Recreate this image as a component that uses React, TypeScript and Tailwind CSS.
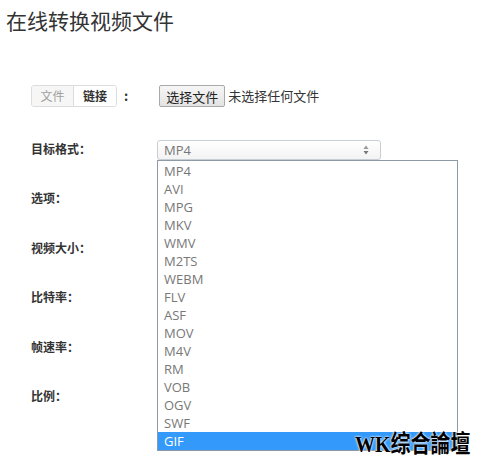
import { useState } from "react";

const formats = ["MP4", "AVI", "MPG", "MKV", "WMV", "M2TS", "WEBM", "FLV", "ASF", "MOV", "M4V", "RM", "VOB", "OGV", "SWF", "GIF"];

const labels = ["目标格式：", "选项：", "视频大小：", "比特率：", "帧速率：", "比例："];

export default function App() {
  const [selected] = useState("GIF");

  return (
    <div
      className="relative w-[484px] h-[472px] bg-white overflow-hidden text-[#333]"
      style={{ fontFamily: '"Noto Sans CJK SC", "Open Sans", sans-serif' }}
    >
      <h1 className="pl-[6px] pt-[6px] h-[44px] text-[21px] leading-[28px] font-normal text-[#333]">在线转换视频文件</h1>

      <div className="pl-[31px] pt-[41px]">
        <div className="flex items-center h-[22px]">
          <div className="flex h-[22px] border border-[#dcdcdc] rounded-[3px] text-[12px] overflow-hidden">
            <span className="w-[42px] flex items-center justify-center bg-[#f6f6f6] text-[#a0a0a0] border-r border-[#dcdcdc]">文件</span>
            <span className="w-[42px] flex items-center justify-center bg-white text-[#333] font-bold">链接</span>
          </div>
          <span className="ml-[7px] text-[13px] font-bold">:</span>
          <button className="ml-[31px] h-[22px] px-[6px] border border-[#a9a9a9] rounded-[2px] bg-gradient-to-b from-[#f6f6f6] to-[#e3e3e3] text-[13px] leading-none text-[#222]">
            选择文件
          </button>
          <span className="ml-[3px] text-[13px] text-[#333]">未选择任何文件</span>
        </div>

        <div className="mt-[17px] flex flex-col">
          {labels.map((label, i) => (
            <div key={label} className="flex items-center h-[49.5px]">
              <span className="w-[126px] text-[12px] font-bold text-[#333]">{label}</span>
              {i === 0 && (
                <div className="relative mt-[3px]">
                  <div className="flex items-center justify-between w-[224px] h-[20px] border border-[#c8ced6] rounded-[3px] bg-gradient-to-b from-white to-[#f3f3f3] pl-[6px] pr-[11px] shadow-[0_1px_1px_rgba(0,0,0,0.05)]">
                    <span className="text-[13px] text-[#777]" style={{ fontFamily: '"Open Sans", sans-serif' }}>MP4</span>
                    <svg width="6" height="10" viewBox="0 0 6 10">
                      <path d="M3 0.5 L5.5 4 H0.5 Z" fill="#999" />
                      <path d="M3 9.5 L5.5 6 H0.5 Z" fill="#777" />
                    </svg>
                  </div>
                  <ul
                    className="absolute left-0 top-[20px] z-10 w-[301px] border border-[#8e9aa6] bg-white pt-px"
                    style={{ fontFamily: '"Open Sans", sans-serif' }}
                  >
                    {formats.map((f) => (
                      <li
                        key={f}
                        className={
                          f === selected
                            ? "h-[18px] leading-[18px] pl-[6px] text-[13px] bg-[#3399fa] text-white"
                            : "h-[18px] leading-[18px] pl-[6px] text-[13px] text-[#777]"
                        }
                      >
                        {f}
                      </li>
                    ))}
                  </ul>
                </div>
              )}
            </div>
          ))}
        </div>
      </div>

      <div
        className="absolute left-[355px] top-[431px] z-20 whitespace-nowrap text-[20px] leading-[26px] font-bold text-black origin-left scale-y-[1.2]"
        style={{ fontFamily: '"Liberation Serif", "Noto Sans CJK TC", serif', textShadow: "0 0 2px #fff, 0 0 2px #fff" }}
      >
        WK综合論壇
      </div>
    </div>
  );
}
